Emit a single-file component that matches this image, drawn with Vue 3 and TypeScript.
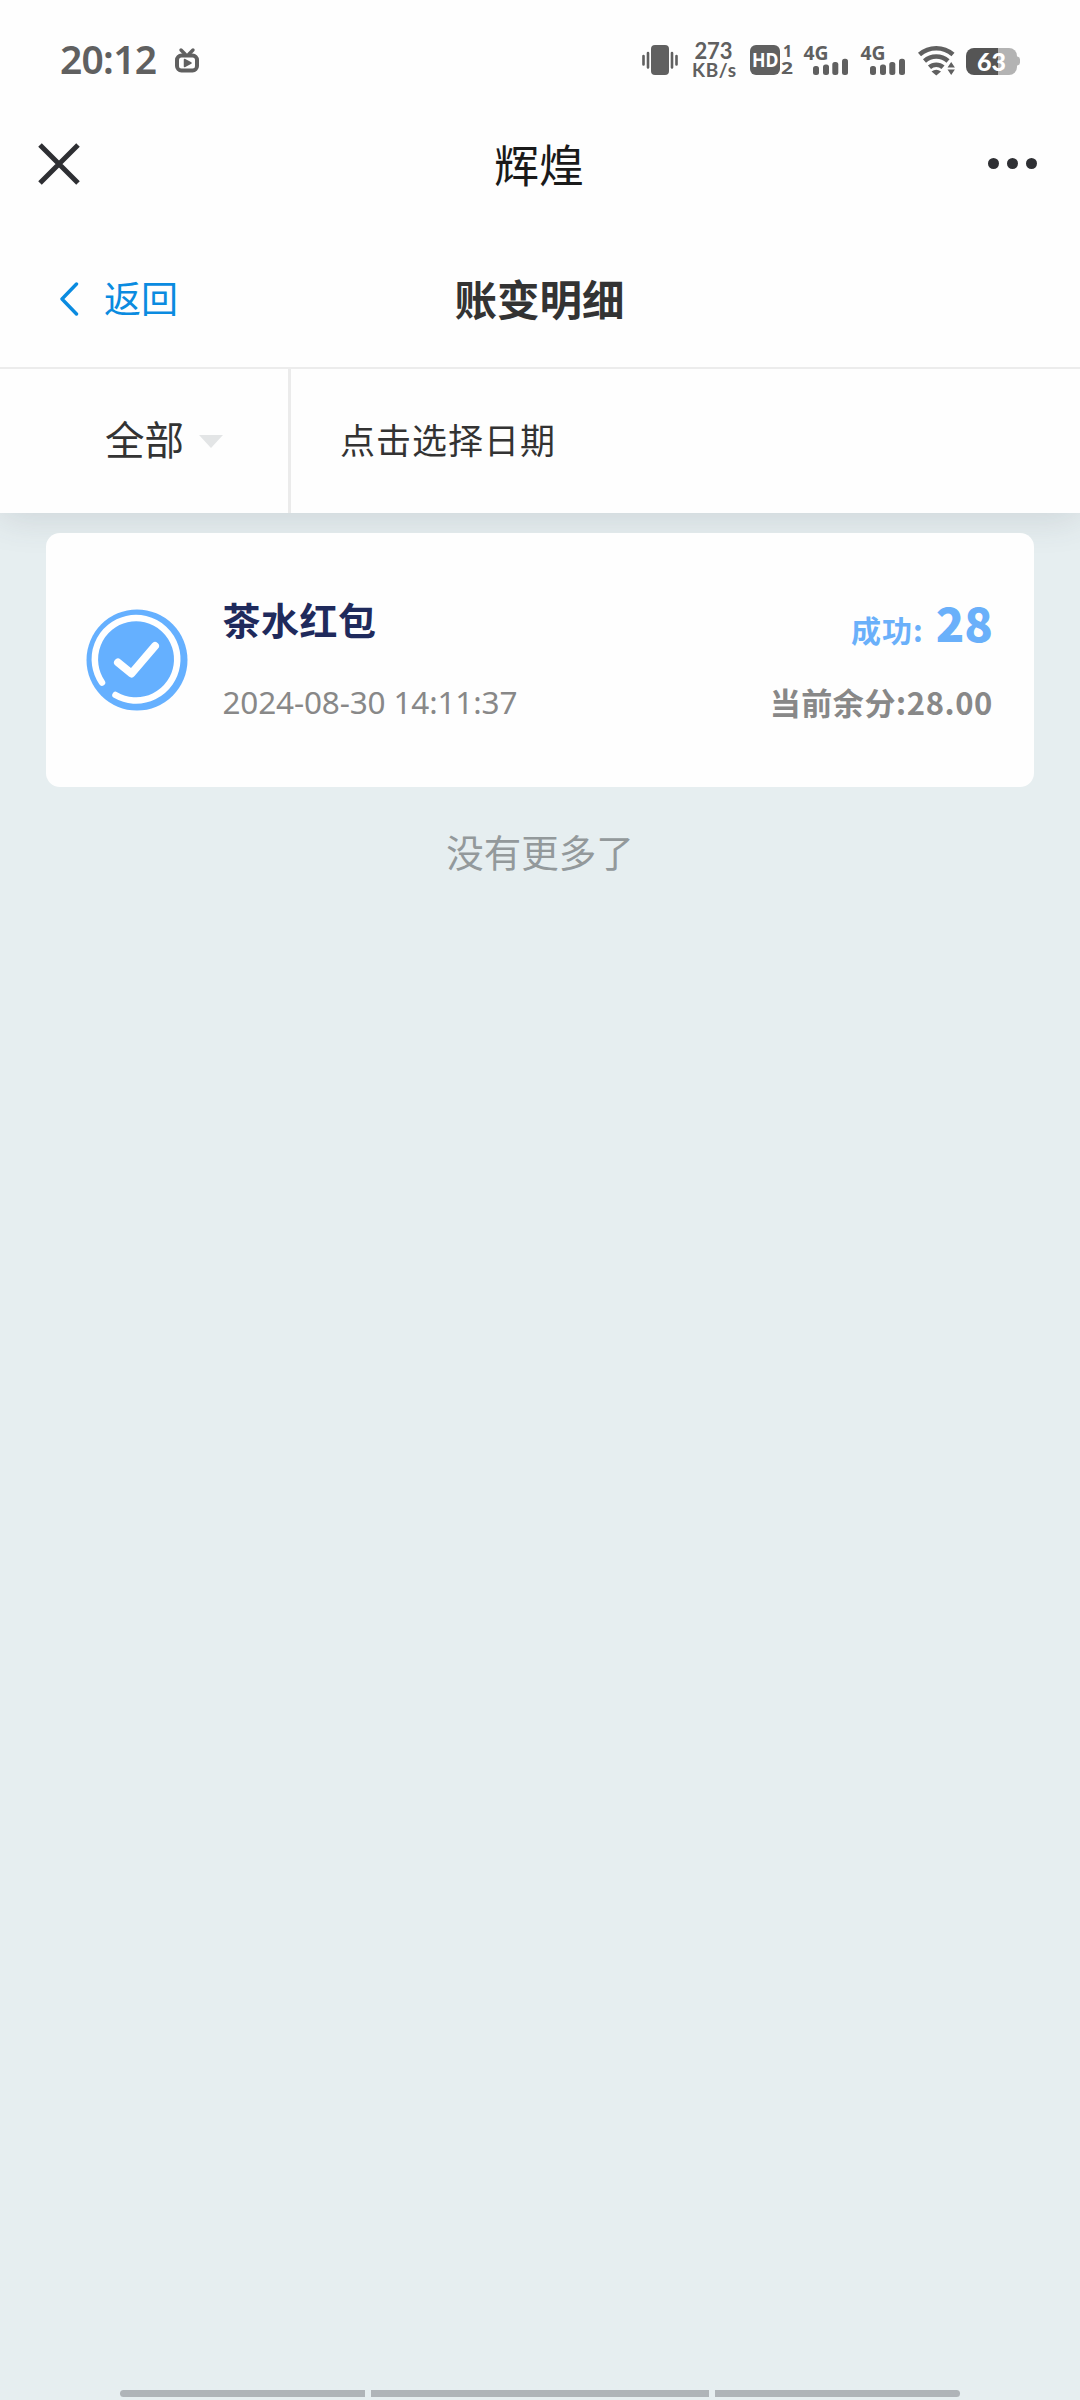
<script setup lang="ts">
interface RecordItem {
  id: number
  title: string
  time: string
  amount: string
  balance: string
}

const records: RecordItem[] = [
  { id: 1, title: '茶水红包', time: '2024-08-30 14:11:37', amount: '28', balance: '28.00' },
]

const signals = [0, 57]
</script>

<template>
  <div class="screen">
    <header class="status">
      <svg width="1080" height="88" viewBox="0 0 1080 88" fill="#606060">
        <text class="med" x="60" y="73.500" font-size="39" textLength="97">20:12</text>
        <rect x="177" y="55.5" width="20" height="15" rx="4.5" fill="none" stroke="#606060" stroke-width="4" />
        <path d="M181 50l4 4M193 50l-4 4" stroke="#606060" stroke-width="3.4" stroke-linecap="round" />
        <path d="M184.500 59.500v7l6.500-3.500z" stroke="#606060" stroke-width="1.500" stroke-linejoin="round" />

        <rect x="651" y="45" width="18" height="30" rx="4" />
        <path d="M643.500 56v8.500M648 53v14.500M672 53v14.500M676.500 56v8.500" stroke="#606060" stroke-width="2.600" stroke-linecap="round" />

        <text class="lato" x="694.500" y="58.700" font-size="22" textLength="38">273</text>
        <text class="lato" x="692" y="76.500" font-size="19" textLength="44">KB/s</text>

        <rect x="750" y="45" width="30" height="30" rx="6" />
        <text class="bold" x="752" y="67" font-size="19" fill="#fff" textLength="26.500" lengthAdjust="spacingAndGlyphs">HD</text>
        <text class="bold" x="783" y="57" font-size="16">1</text>
        <text class="bold" x="781" y="74" font-size="16" textLength="12" lengthAdjust="spacingAndGlyphs">2</text>

        <g v-for="x in signals" :key="x" :transform="`translate(${x} 0)`">
          <text class="bold" x="803.500" y="59.500" font-size="20" textLength="25" lengthAdjust="spacingAndGlyphs">4G</text>
          <rect x="813" y="66" width="6" height="9" rx="2.500" />
          <rect x="823" y="64.500" width="6" height="10.500" rx="2.500" />
          <rect x="832.300" y="62" width="6" height="13" rx="2.500" />
          <rect x="842" y="58.700" width="6" height="16.300" rx="2.500" />
        </g>

        <g fill="none" stroke="#606060" stroke-width="4.600">
          <path d="M919.500 54.500a25.500 25.500 0 0 1 33.500 0" />
          <path d="M924.500 61a17.700 17.700 0 0 1 23.500 0" />
          <path d="M929.500 67.300a10 10 0 0 1 13.500 0" />
        </g>
        <path d="M931.500 71.500q4.700-3.500 9.500 0l-4.700 4z" />
        <path d="M947.500 67.500l3.700-5.500 3.700 5.500zM947.500 69.500h7.400l-3.700 5.500z" />

        <path d="M1015 56.500h2.500a3 3 0 0 1 2.500 3v3a3 3 0 0 1-2.500 3h-2.500z" fill="#b3b3b3" />
        <path d="M998 48h11a8 8 0 0 1 8 8v11a8 8 0 0 1-8 8h-11z" fill="#b3b3b3" />
        <path d="M998 48h-24a8 8 0 0 0-8 8v11a8 8 0 0 0 8 8h24z" fill="#555" />
        <text class="lato heavy" x="977" y="70.500" font-size="25" fill="#fff" textLength="29">63</text>
      </svg>
    </header>

    <div class="appbar">
      <svg class="close" width="42" height="42" viewBox="0 0 42 42">
        <path d="M2 2l38 38M40 2l-38 38" stroke="#2e2f33" stroke-width="5" />
      </svg>
      <span class="app-title">辉煌</span>
      <div class="more"><i></i><i></i><i></i></div>
    </div>

    <div class="page-head">
      <div class="back">
        <svg width="20" height="34" viewBox="0 0 20 34">
          <path d="M17.500 2L3 17l14.500 15" fill="none" stroke="#0a8be0" stroke-width="3.400" stroke-linecap="round" stroke-linejoin="round" />
        </svg>
        <span>返回</span>
      </div>
      <h1>账变明细</h1>
      <div class="side"></div>
    </div>

    <div class="filters">
      <div class="kind"><span>全部</span><b class="caret"></b></div>
      <div class="date">点击选择日期</div>
    </div>

    <main class="list">
      <article v-for="r in records" :key="r.id" class="card">
        <svg class="badge" width="102" height="102" viewBox="0 0 102 102">
          <circle cx="51" cy="51" r="50.500" fill="#65b0ff" />
          <path d="M16 73.500A41.200 41.200 0 1 1 29.500 86" fill="none" stroke="#fff" stroke-width="6.500" stroke-linecap="round" />
          <path d="M32 53.500L45.500 64.500L69 37" fill="none" stroke="#fff" stroke-width="8" stroke-linecap="round" stroke-linejoin="round" />
        </svg>
        <div class="info">
          <div class="name">{{ r.title }}</div>
          <div class="time">{{ r.time }}</div>
        </div>
        <div class="sum">
          <div class="amount"><span>成功:</span><strong>{{ r.amount }}</strong></div>
          <div class="balance">当前余分:<em>{{ r.balance }}</em></div>
        </div>
      </article>
      <p class="end">没有更多了</p>
    </main>

    <footer class="gesture"><i></i><i class="mid"></i><i></i></footer>
  </div>
</template>

<style>
body {
  margin: 0;
  background: #e6eef0;
}
</style>

<style scoped>
.screen {
  width: 1080px;
  height: 2400px;
  display: flex;
  flex-direction: column;
  overflow: hidden;
  background: #e6eef0;
  color: #333;
  font-family: "Noto Sans CJK SC", "Noto Sans", sans-serif;
}
.screen * {
  box-sizing: border-box;
}
.status {
  height: 88px;
  flex: none;
  background: #fefefe;
}
.status svg,
.badge {
  display: block;
}
.lato {
  font-family: Lato, "Noto Sans", sans-serif;
  font-weight: 700;
}
.heavy {
  font-weight: 900;
}
.med {
  font-family: "Noto Sans", sans-serif;
  font-weight: 600;
}
.bold {
  font-family: "Noto Sans", sans-serif;
  font-weight: 700;
}
.appbar {
  height: 148px;
  flex: none;
  display: flex;
  align-items: center;
  justify-content: space-between;
  padding: 0 43px 0 38px;
  background: #fefefe;
}
.close {
  margin-top: 3px;
}
.app-title {
  margin: 4px 0 0 10px;
  font-size: 45px;
  line-height: 60px;
  color: #1a1a1a;
}
.more {
  display: flex;
  gap: 8px;
  margin-top: 3px;
}
.more i {
  width: 11px;
  height: 11px;
  border-radius: 50%;
  background: #2e2f33;
}
.page-head {
  position: relative;
  z-index: 1;
  height: 133px;
  flex: none;
  display: flex;
  align-items: center;
  padding: 0 60px 9px 59px;
  border-bottom: 2px solid #ececec;
  background: #fefefe;
}
.back {
  flex: 1;
  display: flex;
  align-items: center;
  gap: 25px;
  font-size: 37px;
  line-height: 50px;
  color: #0a8be0;
}
.back svg {
  margin-top: 3px;
}
.page-head h1 {
  margin: 1px 0 0;
  font-size: 42.500px;
  line-height: 60px;
  font-weight: 700;
}
.side {
  flex: 1;
}
.filters {
  position: relative;
  height: 144px;
  flex: none;
  display: flex;
  background: #fefefe;
  box-shadow: 0 4px 36px rgba(60, 70, 80, 0.16);
}
.kind {
  width: 291px;
  display: flex;
  align-items: center;
  padding: 0 0 7px 105px;
  border-right: 3px solid #ebebeb;
  font-size: 39.500px;
}
.caret {
  margin: 7px 0 0 15px;
  border: 12.500px solid transparent;
  border-top: 13px solid #e3e5e6;
  border-bottom: 0;
}
.date {
  display: flex;
  align-items: center;
  padding: 0 0 6px 49px;
  font-size: 35px;
  letter-spacing: 1px;
}
.list {
  flex: 1;
  padding: 20px 46px 0;
}
.card {
  position: relative;
  height: 254px;
  display: flex;
  align-items: center;
  padding: 0 41px 0 39.500px;
  border-radius: 14px;
  background: #fefefe;
}
.info {
  flex: 1;
  margin-left: 35px;
}
.name {
  font-size: 38px;
  line-height: 50px;
  letter-spacing: 0.500px;
  font-weight: 700;
  color: #1f2a5c;
}
.time {
  margin-top: 33px;
  font-family: "Noto Sans", sans-serif;
  font-size: 31.500px;
  line-height: 50px;
  letter-spacing: -0.150px;
  color: #888;
}
.sum {
  padding-top: 5px;
  text-align: right;
  font-weight: 700;
}
.amount {
  display: flex;
  align-items: baseline;
  justify-content: flex-end;
  height: 54px;
  line-height: 47px;
  font-size: 30px;
  color: #6ab0fa;
}
.amount span {
  letter-spacing: 1px;
}
.amount strong {
  margin-left: 12px;
  font-size: 47px;
}
.balance {
  margin-top: 25px;
  font-size: 31px;
  line-height: 50px;
  letter-spacing: 0.600px;
  color: #888;
}
.balance em {
  font-style: normal;
}
.end {
  margin: 39px 0 0;
  font-size: 37.500px;
  line-height: 50px;
  text-align: center;
  color: #93999b;
}
.gesture {
  height: 10px;
  flex: none;
  display: flex;
  gap: 6px;
  padding: 0 120px;
}
.gesture i {
  width: 245px;
  height: 7px;
  background: #afb4b8;
}
.gesture i:first-child {
  border-radius: 4px 0 0 4px;
}
.gesture i:last-child {
  border-radius: 0 4px 4px 0;
}
.gesture .mid {
  width: 338px;
}
</style>
